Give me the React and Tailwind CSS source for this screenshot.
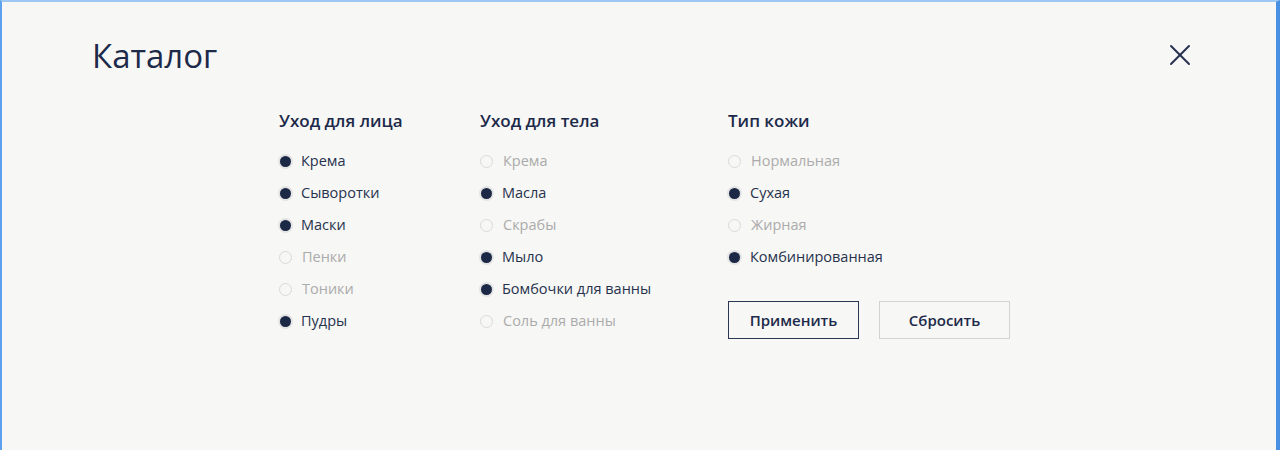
import { X } from 'lucide-react';

const COLUMNS = [
  {
    title: 'Уход для лица',
    width: 'w-[201px]',
    items: [
      ['Крема', true],
      ['Сыворотки', true],
      ['Маски', true],
      ['Пенки', false],
      ['Тоники', false],
      ['Пудры', true],
    ],
  },
  {
    title: 'Уход для тела',
    width: 'w-[248px]',
    items: [
      ['Крема', false],
      ['Масла', true],
      ['Скрабы', false],
      ['Мыло', true],
      ['Бомбочки для ванны', true],
      ['Соль для ванны', false],
    ],
  },
];

const SKIN = [
  ['Нормальная', false],
  ['Сухая', true],
  ['Жирная', false],
  ['Комбинированная', true],
];

function Option({ label, checked }) {
  return (
    <div className="h-[32px] flex items-center gap-[10px]">
      {checked ? (
        <span className="w-[11px] h-[11px] ml-[1px] rounded-full bg-[#1b2846] shadow-[0_0_0_2px_#e4e4e4]" />
      ) : (
        <span className="w-[13px] h-[13px] rounded-full border border-[#d9d9d9]" />
      )}
      <span className={`text-[14.5px] ${checked ? 'text-[#26324d]' : 'text-[#ababab]'}`}>{label}</span>
    </div>
  );
}

export default function App() {
  return (
    <div
      className="h-[450px] w-full bg-[#f7f7f5] border-l-2 border-t-2 border-r-4 border-l-[#5ea1ee] border-t-[#9cc8f3] border-r-[#4a90e2] text-[#1f2b47]"
      style={{ fontFamily: '"Open Sans", "Noto Sans", sans-serif' }}
    >
      <div className="flex items-center justify-between h-[40px] mt-[33px] pl-[90px] pr-[78px]">
        <h1 className="text-[33px] leading-none text-[#1d2a4a]">Каталог</h1>
        <X className="w-[36px] h-[36px] text-[#26324d]" strokeWidth={1.3} />
      </div>

      <div className="flex mt-[34px] pl-[277px]">
        {COLUMNS.map((col) => (
          <div key={col.title} className={col.width}>
            <h2 className="text-[17px] leading-[24px] font-semibold text-[#1d2a4a]">{col.title}</h2>
            <div className="mt-[12px]">
              {col.items.map(([label, checked]) => (
                <Option key={label} label={label} checked={checked} />
              ))}
            </div>
          </div>
        ))}
        <div>
          <h2 className="text-[17px] leading-[24px] font-semibold text-[#1d2a4a]">Тип кожи</h2>
          <div className="mt-[12px]">
            {SKIN.map(([label, checked]) => (
              <Option key={label} label={label} checked={checked} />
            ))}
          </div>
          <div className="flex gap-[20px] mt-[28px]">
            <button className="w-[131px] h-[38px] border border-[#2a3653] text-[15px] font-semibold text-[#1d2a4a]">
              Применить
            </button>
            <button className="w-[131px] h-[38px] border border-[#d3d3d3] text-[15px] font-semibold text-[#1d2a4a]">
              Сбросить
            </button>
          </div>
        </div>
      </div>
    </div>
  );
}
